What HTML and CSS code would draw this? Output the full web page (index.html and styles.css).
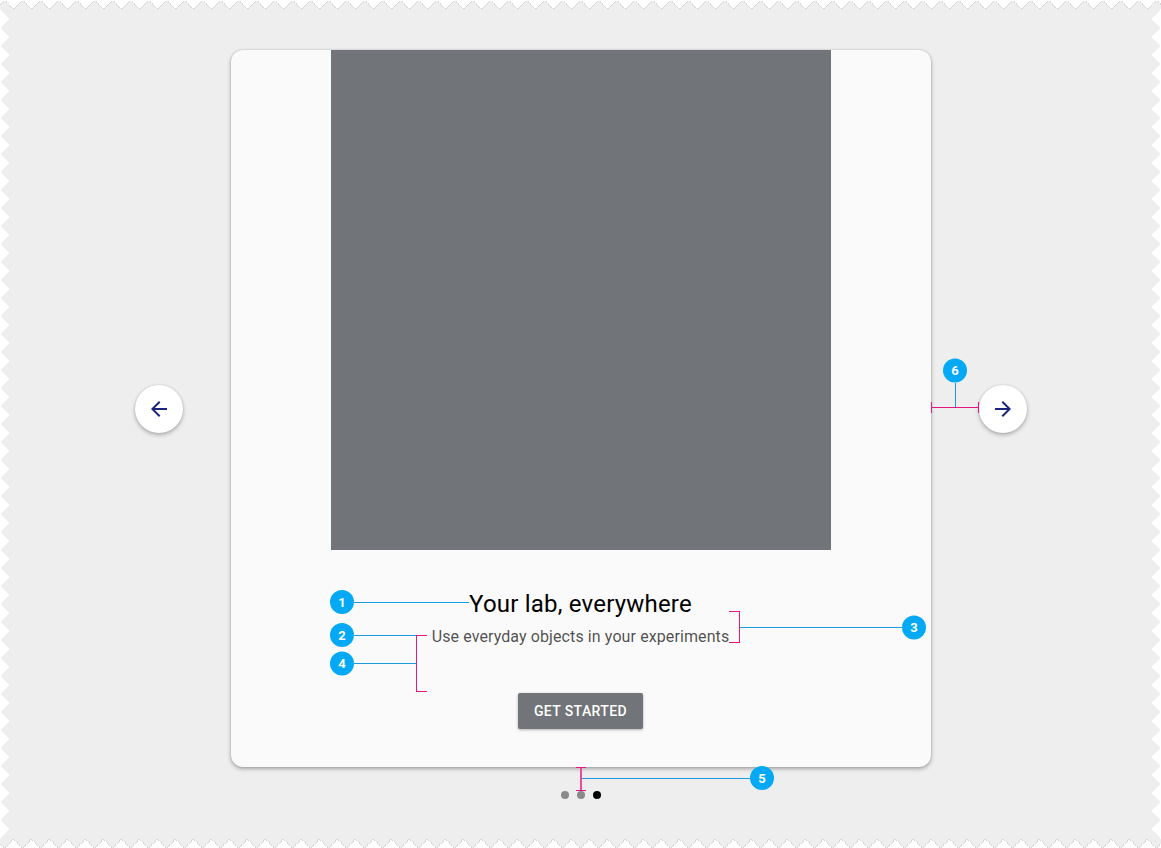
FILE: index.html
```html
<!DOCTYPE html>
<html lang="en">
<head>
<meta charset="utf-8">
<title>Onboarding carousel spec</title>
<link rel="stylesheet" href="styles.css">
</head>
<body>
<div class="frame">
  <div class="paper" aria-hidden="true"><div class="paper-sheet"></div></div>

  <div class="stage">
    <button class="nav-btn" aria-label="Previous">
      <svg viewBox="0 0 24 24" class="nav-icon"><path d="M20 11H7.83l5.59-5.59L12 4l-8 8 8 8 1.41-1.41L7.83 13H20v-2z"/></svg>
    </button>
    <div class="card">
      <div class="hero"></div>
      <h1 class="title">Your lab, everywhere</h1>
      <p class="subtitle">Use everyday objects in your experiments</p>
      <button class="cta">GET STARTED</button>
    </div>
    <button class="nav-btn" aria-label="Next">
      <svg viewBox="0 0 24 24" class="nav-icon"><path d="M12 4l-1.41 1.41L16.17 11H4v2h12.17l-5.58 5.59L12 20l8-8z"/></svg>
    </button>
  </div>

  <div class="dots">
    <span class="dot"></span>
    <span class="dot"></span>
    <span class="dot dot-active"></span>
  </div>

  <svg class="annotations" viewBox="0 0 1161 848" width="1161" height="848" aria-hidden="true">
    <g class="blue-lines">
      <line x1="354" y1="602.5" x2="469" y2="602.5"/>
      <line x1="354" y1="635.5" x2="417" y2="635.5"/>
      <line x1="354" y1="663.5" x2="417" y2="663.5"/>
      <line x1="740" y1="627.5" x2="902" y2="627.5"/>
      <line x1="582" y1="778.5" x2="750" y2="778.5"/>
      <line x1="955.5" y1="383" x2="955.5" y2="407"/>
    </g>
    <g class="pink-lines">
      <line x1="416.5" y1="635" x2="416.5" y2="692"/>
      <line x1="416" y1="635.5" x2="427" y2="635.5"/>
      <line x1="416" y1="691.5" x2="427" y2="691.5"/>
      <line x1="739.5" y1="611" x2="739.5" y2="643"/>
      <line x1="729" y1="611.5" x2="740" y2="611.5"/>
      <line x1="729" y1="642.5" x2="740" y2="642.5"/>
      <line x1="581" y1="767" x2="581" y2="790" class="thick"/>
      <line x1="576" y1="767.5" x2="586" y2="767.5"/>
      <line x1="576" y1="790.5" x2="586" y2="790.5"/>
      <line x1="931" y1="407.5" x2="979" y2="407.5"/>
      <line x1="931.5" y1="402" x2="931.5" y2="413"/>
      <line x1="978.5" y1="402" x2="978.5" y2="413"/>
    </g>
    <g class="badges">
      <circle cx="342" cy="602" r="12"/>
      <circle cx="342" cy="635" r="12"/>
      <circle cx="342" cy="663.5" r="12"/>
      <circle cx="914" cy="627.5" r="12"/>
      <circle cx="762" cy="778" r="12"/>
      <circle cx="955" cy="370.5" r="12"/>
    </g>
    <g class="badge-text">
      <text x="342" y="606.5">1</text>
      <text x="342" y="639.5">2</text>
      <text x="342" y="668">4</text>
      <text x="914" y="632">3</text>
      <text x="762" y="782.5">5</text>
      <text x="955" y="375">6</text>
    </g>
  </svg>
</div>
</body>
</html>
```

FILE: styles.css
```css
html, body {
  margin: 0;
  padding: 0;
  background: #ffffff;
}

body {
  font-family: Roboto, "Liberation Sans", Arial, sans-serif;
}

.frame {
  position: relative;
  isolation: isolate;
  width: 1161px;
  height: 848px;
  box-sizing: border-box;
  padding-top: 50px;
  display: flex;
  flex-direction: column;
  align-items: center;
  overflow: hidden;
}

/* torn-paper zigzag background */
.paper {
  position: absolute;
  inset: 0;
  z-index: -1;
  filter: drop-shadow(0 0 0.7px rgba(0, 0, 0, 0.5));
}

.paper-sheet {
  --t: 9px;
  --p: 18px;
  width: 100%;
  height: 100%;
  background: #eeeeee;
  -webkit-mask:
    linear-gradient(#000 0 0) center / calc(100% - 2 * var(--t)) calc(100% - 2 * var(--t)) no-repeat,
    conic-gradient(from 135deg at top, #000 90deg, #0000 0) top / var(--p) var(--t) repeat-x,
    conic-gradient(from -45deg at bottom, #000 90deg, #0000 0) bottom / var(--p) var(--t) repeat-x,
    conic-gradient(from 45deg at left, #000 90deg, #0000 0) left / var(--t) var(--p) repeat-y,
    conic-gradient(from -135deg at right, #000 90deg, #0000 0) right / var(--t) var(--p) repeat-y;
  mask:
    linear-gradient(#000 0 0) center / calc(100% - 2 * var(--t)) calc(100% - 2 * var(--t)) no-repeat,
    conic-gradient(from 135deg at top, #000 90deg, #0000 0) top / var(--p) var(--t) repeat-x,
    conic-gradient(from -45deg at bottom, #000 90deg, #0000 0) bottom / var(--p) var(--t) repeat-x,
    conic-gradient(from 45deg at left, #000 90deg, #0000 0) left / var(--t) var(--p) repeat-y,
    conic-gradient(from -135deg at right, #000 90deg, #0000 0) right / var(--t) var(--p) repeat-y;
}

.stage {
  display: flex;
  align-items: center;
  gap: 48px;
}

.nav-btn {
  width: 48px;
  height: 48px;
  border: none;
  border-radius: 50%;
  background: #ffffff;
  box-shadow: 0 2px 4px rgba(0, 0, 0, 0.28), 0 0 2px rgba(0, 0, 0, 0.12);
  display: flex;
  align-items: center;
  justify-content: center;
  padding: 0;
}

.nav-icon {
  width: 24px;
  height: 24px;
  fill: #1a237e;
}

.card {
  width: 700px;
  height: 717px;
  box-sizing: border-box;
  background: #fafafa;
  border-radius: 12px;
  box-shadow: 0 2px 4px rgba(0, 0, 0, 0.3), 0 0 2px rgba(0, 0, 0, 0.18);
  display: flex;
  flex-direction: column;
  align-items: center;
  overflow: hidden;
}

.hero {
  width: 500px;
  height: 500px;
  background: #717478;
  flex: none;
}

.title {
  margin: 37px 0 0;
  font-size: 24px;
  font-weight: 400;
  line-height: 34px;
  letter-spacing: 0.2px;
  color: #000000;
}

.subtitle {
  margin: 6px 0 0;
  font-size: 16px;
  line-height: 20px;
  letter-spacing: 0.1px;
  color: rgba(0, 0, 0, 0.7);
}

.cta {
  margin-top: 46px;
  height: 36px;
  padding: 0 16px;
  border: none;
  border-radius: 2px;
  background: #717478;
  color: #ffffff;
  font-family: Roboto, "Liberation Sans", Arial, sans-serif;
  font-size: 14px;
  font-weight: 500;
  letter-spacing: 0.4px;
  box-shadow: 0 1px 3px rgba(0, 0, 0, 0.3);
}

.dots {
  margin-top: 24px;
  display: flex;
  gap: 8px;
}

.dot {
  width: 8px;
  height: 8px;
  border-radius: 50%;
  background: #8a8a8a;
}

.dot-active {
  background: #000000;
}

.annotations {
  position: absolute;
  left: 0;
  top: 0;
  pointer-events: none;
}

.blue-lines line {
  stroke: #1b9ae2;
  stroke-width: 1;
}

.pink-lines line {
  stroke: #e6177f;
  stroke-width: 1;
}

.pink-lines line.thick {
  stroke-width: 2;
  stroke: #ee4a98;
}

.badges circle {
  fill: #03a9f4;
}

.badge-text text {
  fill: #ffffff;
  font-family: Roboto, "Liberation Sans", Arial, sans-serif;
  font-size: 13px;
  font-weight: 700;
  text-anchor: middle;
}
```
